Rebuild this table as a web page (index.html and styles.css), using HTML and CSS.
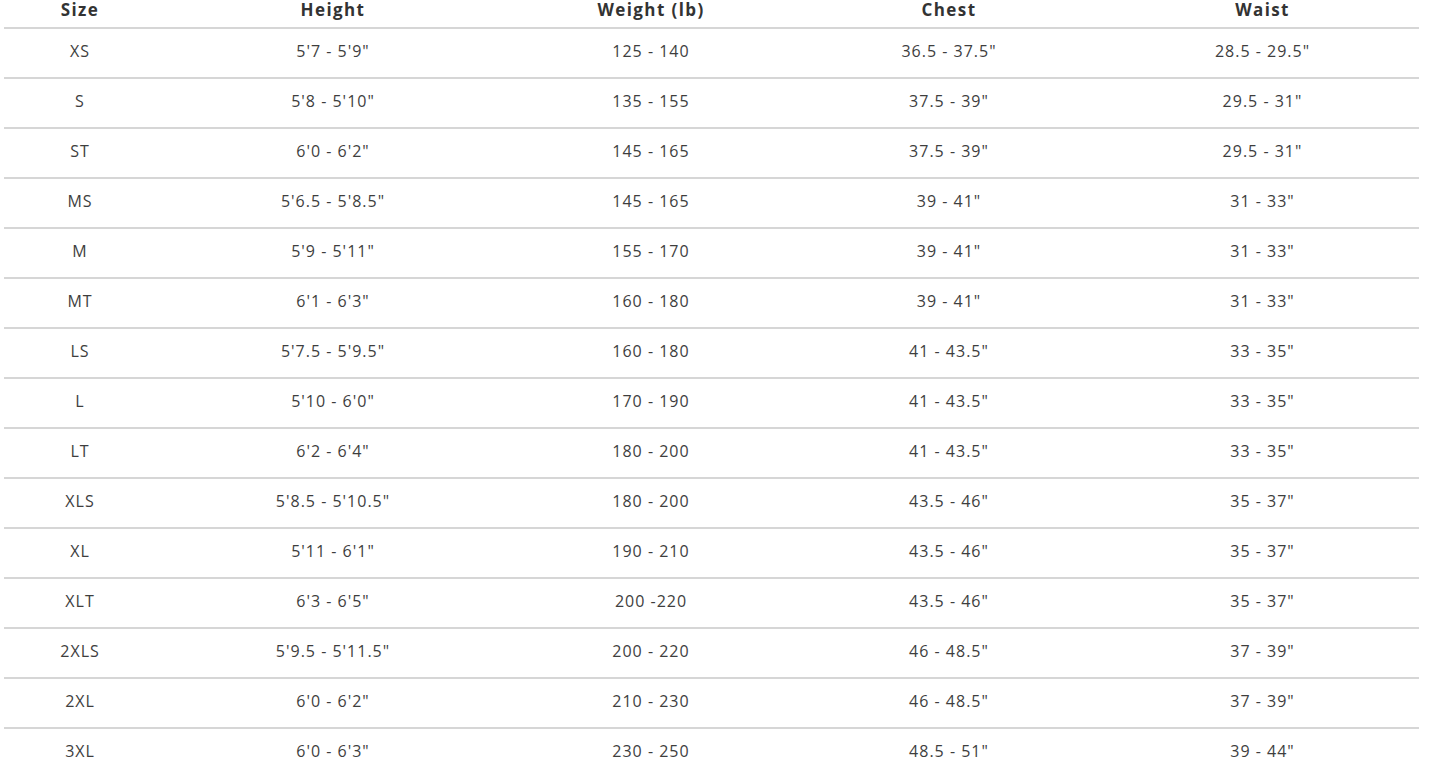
FILE: index.html
```html
<!DOCTYPE html>
<html>
<head>
<meta charset="utf-8">
<link rel="stylesheet" href="styles.css">
</head>
<body>
<div class="wrap">
<table class="sizes">
<colgroup>
<col class="c1"><col class="c2"><col class="c3"><col class="c4"><col class="c5">
</colgroup>
<thead>
<tr><th>Size</th><th>Height</th><th>Weight (lb)</th><th>Chest</th><th>Waist</th></tr>
</thead>
<tbody>
<tr><td>XS</td><td>5'7 - 5'9"</td><td>125 - 140</td><td>36.5 - 37.5"</td><td>28.5 - 29.5"</td></tr>
<tr><td>S</td><td>5'8 - 5'10"</td><td>135 - 155</td><td>37.5 - 39"</td><td>29.5 - 31"</td></tr>
<tr><td>ST</td><td>6'0 - 6'2"</td><td>145 - 165</td><td>37.5 - 39"</td><td>29.5 - 31"</td></tr>
<tr><td>MS</td><td>5'6.5 - 5'8.5"</td><td>145 - 165</td><td>39 - 41"</td><td>31 - 33"</td></tr>
<tr><td>M</td><td>5'9 - 5'11"</td><td>155 - 170</td><td>39 - 41"</td><td>31 - 33"</td></tr>
<tr><td>MT</td><td>6'1 - 6'3"</td><td>160 - 180</td><td>39 - 41"</td><td>31 - 33"</td></tr>
<tr><td>LS</td><td>5'7.5 - 5'9.5"</td><td>160 - 180</td><td>41 - 43.5"</td><td>33 - 35"</td></tr>
<tr><td>L</td><td>5'10 - 6'0"</td><td>170 - 190</td><td>41 - 43.5"</td><td>33 - 35"</td></tr>
<tr><td>LT</td><td>6'2 - 6'4"</td><td>180 - 200</td><td>41 - 43.5"</td><td>33 - 35"</td></tr>
<tr><td>XLS</td><td>5'8.5 - 5'10.5"</td><td>180 - 200</td><td>43.5 - 46"</td><td>35 - 37"</td></tr>
<tr><td>XL</td><td>5'11 - 6'1"</td><td>190 - 210</td><td>43.5 - 46"</td><td>35 - 37"</td></tr>
<tr><td>XLT</td><td>6'3 - 6'5"</td><td>200 -220</td><td>43.5 - 46"</td><td>35 - 37"</td></tr>
<tr><td>2XLS</td><td>5'9.5 - 5'11.5"</td><td>200 - 220</td><td>46 - 48.5"</td><td>37 - 39"</td></tr>
<tr><td>2XL</td><td>6'0 - 6'2"</td><td>210 - 230</td><td>46 - 48.5"</td><td>37 - 39"</td></tr>
<tr><td>3XL</td><td>6'0 - 6'3"</td><td>230 - 250</td><td>48.5 - 51"</td><td>39 - 44"</td></tr>
</tbody>
</table>
</div>
</body>
</html>
```
FILE: styles.css
```css
html, body {
  margin: 0;
  padding: 0;
  background: #ffffff;
}
body {
  font-family: "Open Sans", "Liberation Sans", sans-serif;
  color: #3e3e3e;
  overflow: hidden;
}
.wrap {
  padding-left: 4px;
  margin-top: -7px;
}
.sizes {
  width: 1415px;
  border-collapse: collapse;
  table-layout: fixed;
}
.c1 { width: 152px; }
.c2 { width: 354px; }
.c3 { width: 282px; }
.c4 { width: 314px; }
.c5 { width: 313px; }
.sizes th {
  height: 33px;
  padding: 0 0 1px;
  font-size: 17px;
  font-weight: 700;
  color: #333333;
  letter-spacing: 1.4px;
  text-align: center;
  vertical-align: middle;
  border-bottom: 2px solid #d6d6d6;
}
.sizes td {
  height: 44px;
  padding: 0 0 4px;
  font-size: 16px;
  letter-spacing: 1px;
  text-align: center;
  vertical-align: middle;
  border-bottom: 2px solid #d6d6d6;
}
```
